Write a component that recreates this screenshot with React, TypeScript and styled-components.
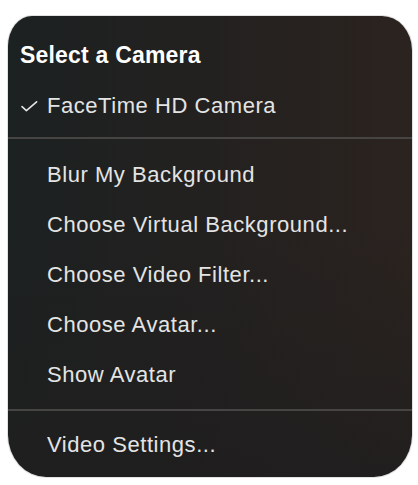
import styled, { createGlobalStyle } from 'styled-components'

const GlobalStyle = createGlobalStyle`
    html, body {
        margin: 0;
        padding: 0;
        background: #ffffff;
    }
`

const Page = styled.div`
    padding: 16px 6px 8px 8px;
`

const Menu = styled.div`
    width: 404px;
    box-sizing: border-box;
    padding: 14px 0 7px;
    border-radius: 24px 30px 38px 38px / 30px 34px 42px 42px;
    background:
        linear-gradient(to bottom, rgba(31, 30, 30, 0) 45%, rgba(31, 30, 30, 0.85) 100%),
        linear-gradient(to right, #1c2121 0%, #232120 50%, #2b231f 100%);
    box-shadow: 0 0 0 1px rgba(170, 170, 170, 0.35);
    font-family: 'Liberation Sans', Arial, sans-serif;
    color: #e4e4e4;
    overflow: hidden;
`

const Title = styled.div`
    padding-left: 12px;
    height: 51px;
    line-height: 50px;
    font-size: 23px;
    font-weight: 700;
    letter-spacing: 0.2px;
    color: #ffffff;
`

const Item = styled.div<{ $checked?: boolean }>`
    display: flex;
    align-items: center;
    height: 50px;
    line-height: 50px;
    padding-left: ${({ $checked }) => ($checked ? '13px' : '39px')};
    font-size: 22px;
    letter-spacing: 0.55px;
    white-space: nowrap;
`

const Mark = styled.span`
    display: flex;
    align-items: center;
    width: 26px;
    height: 50px;
`

const Divider = styled.div<{ $after: number }>`
    height: 2px;
    margin: ${({ $after }) => `${$after === 11 ? 6 : 9}px 0 ${$after}px`};
    background: #464544;
`

const Check = () => (
    <svg width="17" height="11" viewBox="0 0 17 11" fill="none">
        <path
            d="M1 5.6 L5.4 9.6 L15.6 0.8"
            stroke="#e4e4e4"
            strokeWidth="1.6"
            strokeLinecap="round"
            strokeLinejoin="round"
        />
    </svg>
)

const effects = [
    'Blur My Background',
    'Choose Virtual Background...',
    'Choose Video Filter...',
    'Choose Avatar...',
    'Show Avatar'
]

export default function App() {
    return (
        <>
            <GlobalStyle />
            <Page>
                <Menu>
                    <Title>Select a Camera</Title>
                    <Item $checked>
                        <Mark>
                            <Check />
                        </Mark>
                        FaceTime HD Camera
                    </Item>
                    <Divider $after={11} />
                    {effects.map((label) => (
                        <Item key={label}>{label}</Item>
                    ))}
                    <Divider $after={9} />
                    <Item>Video Settings...</Item>
                </Menu>
            </Page>
        </>
    )
}
